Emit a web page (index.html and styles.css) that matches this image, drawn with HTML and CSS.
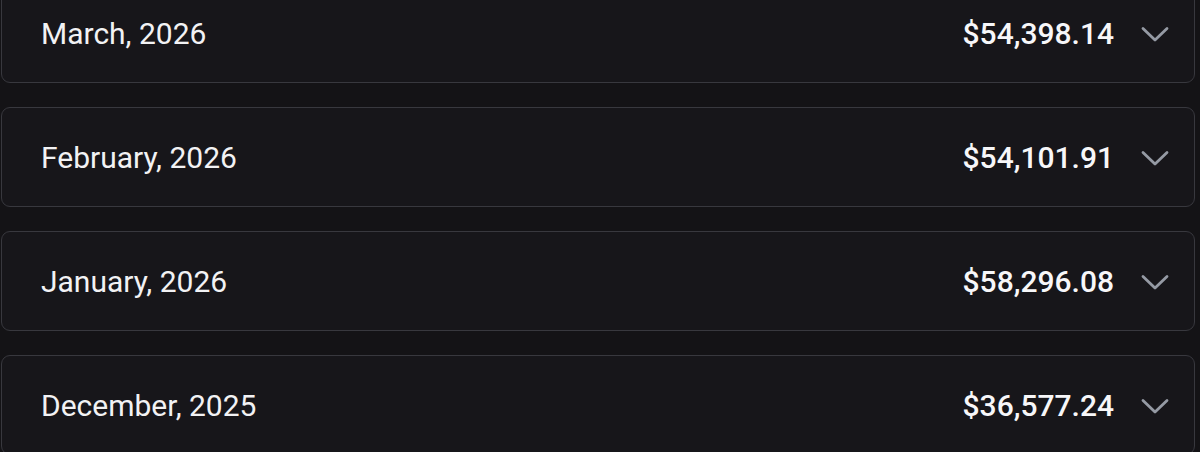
FILE: index.html
```html
<!DOCTYPE html>
<html>
<head>
<meta charset="utf-8">
<link rel="stylesheet" href="styles.css">
</head>
<body>
<div class="list">
  <div class="card">
    <span class="month">March, 2026</span>
    <div class="right"><span class="amount">$54,398.14</span><svg class="chev" viewBox="0 0 28 17"><path d="M2 2.5 L14 14 L26 2.5"/></svg></div>
  </div>
  <div class="card">
    <span class="month">February, 2026</span>
    <div class="right"><span class="amount">$54,101.91</span><svg class="chev" viewBox="0 0 28 17"><path d="M2 2.5 L14 14 L26 2.5"/></svg></div>
  </div>
  <div class="card">
    <span class="month">January, 2026</span>
    <div class="right"><span class="amount">$58,296.08</span><svg class="chev" viewBox="0 0 28 17"><path d="M2 2.5 L14 14 L26 2.5"/></svg></div>
  </div>
  <div class="card">
    <span class="month">December, 2025</span>
    <div class="right"><span class="amount">$36,577.24</span><svg class="chev" viewBox="0 0 28 17"><path d="M2 2.5 L14 14 L26 2.5"/></svg></div>
  </div>
</div>
</body>
</html>
```
FILE: styles.css
```css
html, body {
  margin: 0;
  padding: 0;
  background: #141316;
  height: 452px;
  overflow: hidden;
}
body {
  font-family: Roboto, "Liberation Sans", sans-serif;
  color: #f2f2f4;
}
.list {
  display: flex;
  flex-direction: column;
  gap: 24px;
  margin-top: -17px;
  padding: 0 5px 0 1px;
}
.card {
  height: 98px;
  border: 1px solid #38383e;
  border-radius: 9px;
  background: #17161a;
  display: flex;
  align-items: center;
  justify-content: space-between;
  padding: 0 25px 0 39px;
}
.month {
  font-size: 30px;
  font-weight: 400;
  line-height: 36px;
  padding-top: 2px;
}
.right {
  display: flex;
  align-items: center;
  gap: 27px;
  padding-top: 2px;
}
.amount {
  font-size: 30px;
  font-weight: 500;
  line-height: 36px;
  color: #f7f7f9;
}
.chev {
  width: 28px;
  height: 17px;
  fill: none;
  stroke: #959aa4;
  stroke-width: 2.8;
  stroke-linecap: round;
  stroke-linejoin: round;
}
```
